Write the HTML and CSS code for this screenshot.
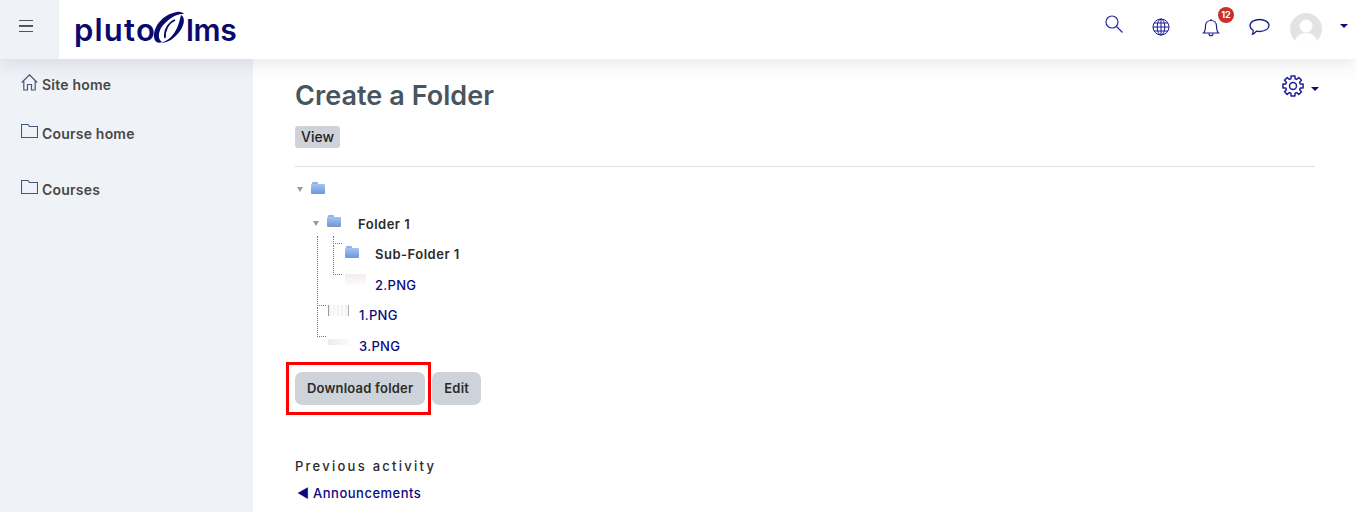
FILE: index.html
```html
<!DOCTYPE html>
<html>
<head>
  <meta charset="UTF-8" />
  <title>Create a Folder</title>
  <link rel="stylesheet" href="styles.css">
</head>
<body>
  <header class="topbar">
    <button class="menu-toggle" aria-label="Menu"><span></span><span></span><span></span></button>
    <a class="logo" href="#">
      <span class="logo-pluto">pluto</span>
      <svg class="logo-mark" width="32" height="34" viewBox="0 0 32 34" fill="#0a0a6e">
        <path d="M1 25C1 14 11 3 24 1C27 .5 29 1 31 3C24 2 14 8 8 17C5 23 5 28 9 31C4 33 1 30 1 25Z"/>
        <path d="M28 4C32 6 32 13 27 20C22 27 15 32 8 32C15 30 21 24 24 17C26 12 27 8 28 4Z"/>
        <path d="M12 27C11 20 15 12 22 9" fill="none" stroke="#0a0a6e" stroke-width="1.800"/>
      </svg>
      <span class="logo-lms">lms</span>
    </a>
    <nav class="top-icons">
      <a class="top-icon search-icon" href="#">
        <svg width="18" height="18" viewBox="0 0 18 18" fill="none" stroke="#2a2aa0" stroke-width="1.2"><circle cx="7" cy="7" r="6"/><path d="M11.5 11.5L17.5 17.5"/></svg>
      </a>
      <a class="top-icon globe-icon" href="#">
        <svg width="18" height="18" viewBox="0 0 18 18" fill="none" stroke="#1c1c90" stroke-width="1"><circle cx="9" cy="9" r="8"/><ellipse cx="9" cy="9" rx="3.8" ry="8"/><path d="M9 1V17M1 9H17M2 5H16M2 13H16"/></svg>
      </a>
      <a class="top-icon bell-icon" href="#">
        <svg width="18" height="19" viewBox="0 0 18 19" fill="none" stroke="#1c1c90" stroke-width="1.2"><path d="M1.5 15C3.5 13 3.5 11 3.5 8C3.5 4.5 6 2.5 9 2.5C12 2.5 14.500 4.500 14.500 8C14.500 11 14.500 13 16.500 15Z"/><path d="M9 1V2.500M7 15.500C7 18.500 11 18.500 11 15.500"/></svg>
        <span class="badge">12</span>
      </a>
      <a class="top-icon chat-icon" href="#">
        <svg width="21" height="18" viewBox="0 0 21 18" fill="none" stroke="#1c1c90" stroke-width="1.3"><path d="M10.500 1.500C15.500 1.500 20 3.800 20 7.500C20 11 15.500 13.500 10.500 13.500C9.500 13.500 8.500 13.400 7.500 13.200C6.500 14.500 5 15.800 3.500 16.200C4 15 4.300 13.500 4.200 12.300C2.200 11.200 1 9.500 1 7.500C1 3.800 5.500 1.500 10.500 1.500Z"/></svg>
      </a>
      <a class="avatar" href="#">
        <svg width="32" height="32" viewBox="0 0 32 32"><defs><clipPath id="avatar-clip"><circle cx="16" cy="16" r="16"/></clipPath></defs><circle cx="16" cy="16" r="16" fill="#e3e3e3"/><g clip-path="url(#avatar-clip)" fill="#fff"><circle cx="16" cy="13" r="6.500"/><path d="M4 32C5 23 10 20 16 20C22 20 27 23 28 32Z"/></g></svg>
      </a>
      <span class="caret"></span>
    </nav>
  </header>

  <div class="page">
    <aside class="sidebar">
      <a class="side-link site-home" href="#">
        <svg width="17" height="17" viewBox="0 0 17 17" fill="none" stroke="#46587a" stroke-width="1.2"><path d="M0.800 8.500L8.500 0.800L16.200 8.500M2.800 7V16H6.500V10.500H10.500V16H14.200V7"/></svg>
        Site home
      </a>
      <a class="side-link course-home" href="#">
        <svg width="17" height="14" viewBox="0 0 17 14" fill="none" stroke="#46587a" stroke-width="1.1"><path d="M0.500 13.500V0.500H7L8.500 2.500H16.500V13.500Z"/></svg>
        Course home
      </a>
      <a class="side-link courses" href="#">
        <svg width="17" height="14" viewBox="0 0 17 14" fill="none" stroke="#46587a" stroke-width="1.1"><path d="M0.500 13.500V0.500H7L8.500 2.500H16.500V13.500Z"/></svg>
        Courses
      </a>
    </aside>

    <main class="content">
      <div class="title-row">
        <h1>Create a Folder</h1>
        <a class="gear" href="#">
          <svg width="22" height="22" viewBox="0 0 24 24" fill="none" stroke="#1c1c9c" stroke-width="1.600" stroke-linejoin="round"><circle cx="12" cy="12" r="3.800"/><path d="M9.740 4.120L9.860 1H14.140L14.260 4.120L15.980 4.830L18.260 2.710L21.290 5.740L19.170 8.020L19.880 9.740L23 9.860V14.140L19.880 14.260L19.170 15.980L21.290 18.260L18.260 21.290L15.980 19.170L14.260 19.880L14.140 23H9.860L9.740 19.880L8.020 19.170L5.740 21.290L2.710 18.260L4.830 15.980L4.120 14.260L1 14.140V9.860L4.120 9.740L4.830 8.020L2.710 5.740L5.740 2.710L8.020 4.830Z"/></svg>
          <span class="caret"></span>
        </a>
      </div>
      <div class="tabs"><span class="tab">View</span></div>
      <hr class="divider">

      <ul class="tree">
        <li class="tree-row root-row">
          <span class="arrow"></span>
          <span class="folder"></span>
        </li>
        <li class="tree-row folder-row">
          <span class="arrow"></span>
          <span class="folder"></span>
          <span class="tree-label">Folder 1</span>
        </li>
        <li class="tree-row sub-row branch-a first">
          <span class="folder"></span>
          <span class="tree-label">Sub-Folder 1</span>
        </li>
        <li class="tree-row sub-row branch-a last">
          <span class="thumb thumb-2"></span>
          <a class="tree-link" href="#">2.PNG</a>
        </li>
        <li class="tree-row file-row branch-b first">
          <span class="thumb thumb-1"></span>
          <a class="tree-link" href="#">1.PNG</a>
        </li>
        <li class="tree-row file-row branch-b last">
          <span class="thumb thumb-3"></span>
          <a class="tree-link" href="#">3.PNG</a>
        </li>
      </ul>

      <div class="actions">
        <span class="highlighted"><button class="btn">Download folder</button></span>
        <button class="btn">Edit</button>
      </div>

      <div class="prev-activity">
        <h2>Previous activity</h2>
        <a href="#"><span class="back">◄</span> Announcements</a>
      </div>
    </main>
  </div>
</body>
</html>
```

FILE: styles.css
```css
body {
  font-family: Inter, 'Liberation Sans', Arial, sans-serif;
  margin: 0;
  padding: 0;
  height: 512px;
  overflow: hidden;
  background: #fff;
  color: #333;
}
a {
  color: #0a0a80;
  text-decoration: none;
}

/* top bar */
.topbar {
  position: relative;
  z-index: 2;
  height: 59px;
  display: flex;
  align-items: center;
  background: #fff;
  box-shadow: 0 4px 18px rgba(40,50,70,0.12);
}
.menu-toggle {
  width: 59px;
  height: 59px;
  padding: 0 7px 7px 0;
  border: none;
  background: #eff2f7;
  display: flex;
  flex-direction: column;
  align-items: center;
  justify-content: center;
  gap: 4px;
}
.menu-toggle span {
  display: block;
  width: 14px;
  height: 1.5px;
  background: #555;
}
.logo {
  display: flex;
  align-items: center;
  margin-left: 15px;
  font-size: 31px;
  font-weight: 600;
  color: #0a0a6e;
  line-height: 1;
}
.logo-pluto {
  letter-spacing: 1.200px;
}
.logo-lms {
  font-size: 30px;
  letter-spacing: -0.300px;
}
.logo-mark {
  margin: -4px 1px 0 -3px;
}
.top-icons {
  margin-left: auto;
  display: flex;
  align-items: center;
  padding-right: 8px;
  height: 100%;
}
.top-icon {
  position: relative;
  display: flex;
  margin-top: -8px;
}
.search-icon { margin-right: 29px; margin-top: -12px; }
.globe-icon { margin-right: 32px; margin-top: -5px; }
.bell-icon { margin-right: 29px; margin-top: -5px; }
.chat-icon { margin-right: 20px; margin-top: -5px; }
.badge {
  position: absolute;
  top: -11px;
  left: 16px;
  width: 16px;
  height: 16px;
  border-radius: 50%;
  background: #c9302c;
  color: #fff;
  font-size: 9px;
  font-weight: 700;
  line-height: 16px;
  text-align: center;
}
.avatar {
  display: flex;
  margin-right: 18px;
  margin-top: -1px;
}
.caret {
  display: inline-block;
  width: 0;
  height: 0;
  border-left: 4px solid transparent;
  border-right: 4px solid transparent;
  border-top: 4px solid #0a0a80;
}
.top-icons .caret {
  margin-top: -8px;
}

/* page */
.page {
  display: flex;
  height: 453px;
}
.sidebar {
  width: 253px;
  flex-shrink: 0;
  background: #eff2f7;
  padding: 14px 0 0 21px;
  box-sizing: border-box;
}
.side-link {
  display: flex;
  align-items: flex-start;
  gap: 4px;
  font-size: 14px;
  font-weight: 600;
  letter-spacing: 0.200px;
  color: #484848;
  line-height: 17px;
}
.side-link svg {
  flex-shrink: 0;
}
.site-home { height: 49px; line-height: 24px; }
.site-home svg { margin-top: 1px; }
.course-home { height: 56px; padding-top: 3px; box-sizing: border-box; }
.courses { padding-top: 3px; }
.course-home svg, .courses svg { margin-top: -1px; }
.content {
  flex: 1;
  padding: 0 41px 0 42px;
}
.title-row {
  display: flex;
  justify-content: space-between;
  height: 67px;
}
h1 {
  margin: 20px 0 0 0;
  font-size: 27px;
  line-height: 34px;
  font-weight: 600;
  letter-spacing: 0.060px;
  color: #47555e;
}
.gear {
  display: flex;
  align-items: center;
  gap: 7px;
  height: 22px;
  margin: 16px -4px 0 0;
}
.gear .caret {
  margin-top: 6px;
}
.tab {
  display: inline-block;
  height: 22px;
  padding: 0 6px;
  border-radius: 3px;
  background: #ced3da;
  color: #222;
  font-size: 14px;
  font-weight: 500;
  line-height: 22px;
}
.tabs {
  height: 22px;
}
.divider {
  margin: 18px 0 0 0;
  border: none;
  border-top: 1px solid #dcdfe4;
}

/* folder tree */
.tree {
  list-style: none;
  margin: 5px 0 0 0;
  padding: 0;
}
.tree-row {
  position: relative;
  display: flex;
  align-items: center;
  height: 30.5px;
  font-size: 13px;
  font-weight: 600;
  letter-spacing: 0.500px;
  color: #2b2b2b;
}
.root-row {
  height: 36px;
  padding-left: 2px;
}
.folder-row {
  height: 31px;
  padding-left: 18px;
}
.sub-row {
  padding-left: 50px;
}
.file-row {
  padding-left: 33px;
}
.arrow {
  width: 0;
  height: 0;
  border-left: 3.500px solid transparent;
  border-right: 3.500px solid transparent;
  border-top: 5px solid #999;
  margin-right: 8px;
  margin-top: -1px;
}
.folder {
  position: relative;
  width: 14px;
  height: 9px;
  margin-top: -3px;
  border-radius: 1px;
  background: linear-gradient(180deg, #a4c4f2, #6f9be2);
  border-bottom: 1px solid #8a97a8;
}
.folder::before {
  content: "";
  position: absolute;
  left: 1px;
  top: -2px;
  width: 6px;
  height: 2px;
  border-radius: 1px 1px 0 0;
  background: #8fb4ea;
}
.tree-label {
  margin-left: 16px;
}
.folder-row .tree-label {
  margin-left: 17px;
}
.tree-link {
  color: #0a0a80;
  margin-left: 10px;
  font-weight: 500;
  letter-spacing: 0.300px;
}
.sub-row .tree-link {
  margin-left: 9px;
}
.thumb {
  width: 21px;
  height: 11px;
  margin-top: -10px;
}
.thumb-1 {
  border-left: 1px solid #999;
  border-right: 1px solid #aaa;
  background: repeating-linear-gradient(90deg, #f2f2f4 0 2px, #fbfbfb 2px 4px);
  box-sizing: border-box;
}
.thumb-2 {
  background: linear-gradient(180deg, #f4eded, #fbfbfb);
}
.thumb-3 {
  height: 6px;
  margin-top: -8px;
  background: linear-gradient(90deg, #ececec, #fafafa);
}

/* dotted connectors */
.branch-a::before, .branch-b::before {
  content: "";
  position: absolute;
  box-sizing: border-box;
  border-left: 1px dotted #777;
  border-bottom: 1px dotted #777;
  width: 9px;
}
.branch-a::before { left: 38px; }
.branch-b::before { left: 22px; }
.branch-a.first::before { top: -3px; height: 8px; }
.branch-a.last::before { top: -25px; height: 30px; }
.branch-b.first::before { top: -64px; height: 70px; }
.branch-b.last::before { top: -24px; height: 30px; }

/* buttons */
.actions {
  display: flex;
  gap: 7px;
  margin-top: 11px;
}
.highlighted {
  position: relative;
  display: flex;
}
.highlighted::after {
  content: "";
  position: absolute;
  left: -9px;
  top: -10px;
  right: -6px;
  bottom: -10px;
  border: 3px solid #f00;
}
.btn {
  height: 33px;
  padding: 0 12px 2px 12px;
  border: none;
  border-radius: 7px;
  background: #ced3da;
  color: #2b2b2b;
  font-family: inherit;
  font-size: 13px;
  font-weight: 600;
  letter-spacing: 0.200px;
}
.prev-activity {
  margin-top: 52px;
}
h2 {
  margin: 0;
  font-size: 13px;
  line-height: 18px;
  font-weight: 500;
  letter-spacing: 2.250px;
  color: #2b2b2b;
}
.prev-activity a {
  display: block;
  margin-top: 9px;
  padding-left: 2px;
  font-size: 13px;
  font-weight: 500;
  letter-spacing: 0.500px;
  line-height: 18px;
}
.back {
  letter-spacing: 0;
}
```
